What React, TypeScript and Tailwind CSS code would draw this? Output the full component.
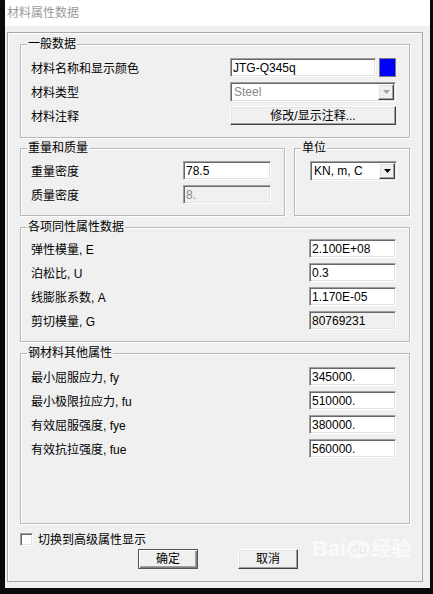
import React from "react";

const FONT = "font-['Liberation_Sans','Noto_Sans_CJK_SC',sans-serif]";

const sunken =
  "border border-t-[#a0a0a0] border-l-[#a0a0a0] border-b-[#ffffff] border-r-[#ffffff] shadow-[inset_1px_1px_0_#696969,inset_-1px_-1px_0_#e3e3e3]";
const raised =
  "border border-t-[#ffffff] border-l-[#ffffff] border-b-[#404040] border-r-[#404040] shadow-[inset_-1px_-1px_0_#a0a0a0,inset_1px_1px_0_#e3e3e3] bg-[#f0f0f0]";

function Group({
  title,
  className,
  children,
}: {
  title: string;
  className: string;
  children?: React.ReactNode;
}) {
  return (
    <div
      className={`relative border border-[#b9b9b9] shadow-[inset_1px_1px_0_#ffffff,1px_1px_0_#ffffff] ${className}`}
    >
      <span className="absolute left-[6px] top-[-9px] bg-[#f0f0f0] px-[1px] text-[12px] leading-[16px] text-black">
        {title}
      </span>
      {children}
    </div>
  );
}

function Input({
  value,
  w,
  disabled,
  gray,
}: {
  value: string;
  w: string;
  disabled?: boolean;
  gray?: boolean;
}) {
  return (
    <div
      className={`${w} h-[19px] ${sunken} ${disabled ? "bg-[#f0f0f0]" : "bg-white"} flex items-center pl-[2px] text-[12px] leading-[14px] ${gray ? "text-[#8a8a8a]" : "text-black"}`}
    >
      {value}
    </div>
  );
}

function Arrow({ gray }: { gray?: boolean }) {
  return (
    <div className={`w-[16px] h-[16px] ${raised} flex items-center justify-center`}>
      <svg width="7" height="4" viewBox="0 0 7 4">
        <path d="M0 0 H7 L3.5 4 Z" fill={gray ? "#a0a0a0" : "#000"} />
      </svg>
    </div>
  );
}

function Select({ value, w, gray }: { value: string; w: string; gray?: boolean }) {
  return (
    <div className={`${w} h-[20px] ${sunken} bg-white flex items-center justify-between pl-[3px] pr-[1px]`}>
      <span className={`text-[12px] leading-[14px] ${gray ? "text-[#8a8a8a]" : "text-black"}`}>{value}</span>
      <Arrow gray={gray} />
    </div>
  );
}

function Row({ label, children, first }: { label: string; children: React.ReactNode; first?: boolean }) {
  return (
    <div className={`flex items-center h-[19px] ${first ? "" : "mt-[5px]"}`}>
      <span className="flex-1 text-[12px] leading-[16px] text-black pt-[2px]">{label}</span>
      {children}
    </div>
  );
}

export default function App() {
  return (
    <div className={`w-[433px] h-[594px] bg-[#0b0b0b] ${FONT} overflow-hidden`}>
      <div className="relative ml-[5px] w-[425px] h-[588px] bg-[#f0f0f0] flex flex-col">
        <div className="h-[26px] bg-white flex items-center pl-[2px] text-[12px] text-[#9a9a9a]">
          材料属性数据
        </div>
        <div className="mt-[6px] ml-[2px] w-[416px] h-[550px] border border-[#a9a9a9] shadow-[inset_1px_1px_0_#ffffff] px-[12px] pt-[11px] flex flex-col">
          <Group title="一般数据" className="h-[94px] pt-[13px] pl-[10px] pr-[13px]">
            <div className="flex items-center h-[19px]">
              <span className="flex-1 text-[12px] leading-[16px] pt-[2px]">材料名称和显示颜色</span>
              <Input value="JTG-Q345q" w="w-[146px]" />
              <div className="ml-[3px] w-[17px] h-[19px] border border-[#7a7a7a] bg-[#0000ff]" />
            </div>
            <div className="flex items-center h-[20px] mt-[5px]">
              <span className="flex-1 text-[12px] leading-[16px] pt-[2px]">材料类型</span>
              <Select value="Steel" w="w-[166px]" gray />
            </div>
            <div className="flex items-center h-[19px] mt-[4px]">
              <span className="flex-1 text-[12px] leading-[16px] pt-[2px]">材料注释</span>
              <div className={`w-[166px] h-[19px] ${raised} flex items-center justify-center text-[12px] leading-[14px]`}>
                修改/显示注释...
              </div>
            </div>
          </Group>

          <div className="mt-[10px] flex gap-[9px]">
            <Group title="重量和质量" className="w-[265px] h-[68px] pt-[12px] pl-[10px] pr-[13px]">
              <Row label="重量密度" first>
                <Input value="78.5" w="w-[88px]" />
              </Row>
              <Row label="质量密度">
                <Input value="8." w="w-[88px]" disabled gray />
              </Row>
            </Group>
            <Group title="单位" className="w-[116px] h-[68px] pt-[12px] pl-[15px]">
              <Select value="KN, m, C" w="w-[87px]" />
            </Group>
          </div>

          <Group title="各项同性属性数据" className="mt-[11px] h-[115px] pt-[11px] pl-[10px] pr-[13px]">
            <Row label="弹性模量, E" first>
              <Input value="2.100E+08" w="w-[87px]" />
            </Row>
            <Row label="泊松比, U">
              <Input value="0.3" w="w-[87px]" />
            </Row>
            <Row label="线膨胀系数, A">
              <Input value="1.170E-05" w="w-[87px]" />
            </Row>
            <Row label="剪切模量, G">
              <Input value="80769231" w="w-[87px]" disabled />
            </Row>
          </Group>

          <Group title="钢材料其他属性" className="mt-[11px] h-[171px] pt-[13px] pl-[10px] pr-[13px]">
            <Row label="最小屈服应力, fy" first>
              <Input value="345000." w="w-[87px]" />
            </Row>
            <Row label="最小极限拉应力, fu">
              <Input value="510000." w="w-[87px]" />
            </Row>
            <Row label="有效屈服强度, fye">
              <Input value="380000." w="w-[87px]" />
            </Row>
            <Row label="有效抗拉强度, fue">
              <Input value="560000." w="w-[87px]" />
            </Row>
          </Group>

          <div className="mt-[9px] flex items-center h-[13px]">
            <div className={`w-[13px] h-[13px] bg-white ${sunken}`} />
            <span className="ml-[5px] text-[12px] leading-[16px] pt-[1px]">切换到高级属性显示</span>
          </div>

          <div className="mt-[3px] flex pl-[118px] gap-[40px]">
            <div className="w-[60px] h-[20px] border border-[#555555] shadow-[inset_1px_1px_0_#ffffff,inset_-1px_-1px_0_#808080,inset_-2px_-2px_0_#a0a0a0] bg-[#f0f0f0] flex items-center justify-center text-[12px] leading-[14px]">
              确定
            </div>
            <div className={`w-[60px] h-[20px] ${raised} flex items-center justify-center text-[12px] leading-[14px]`}>
              取消
            </div>
          </div>
        </div>

        <div className="absolute left-[307px] top-[537px] flex items-center text-[22px] font-bold leading-[24px] text-white/70 pointer-events-none">
          <span>Bai</span>
          <span className="mx-[1px] rounded-full bg-white/60 text-[#ececec] text-[14px] px-[3px] leading-[18px]">du</span>
          <span className="text-[20px]">经验</span>
        </div>
      </div>
    </div>
  );
}
